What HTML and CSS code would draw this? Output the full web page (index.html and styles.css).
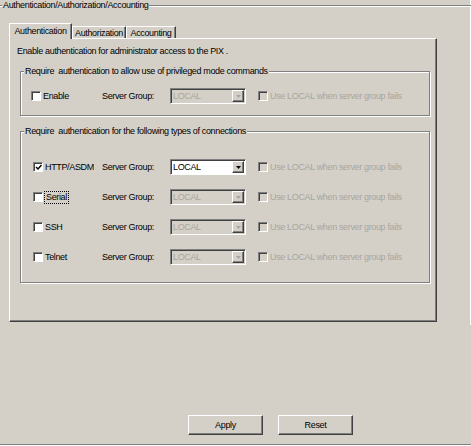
FILE: index.html
```html
<!DOCTYPE html>
<html lang="en">

<head>
    <meta charset="UTF-8" />
    <meta name="viewport" content="width=device-width, initial-scale=1.0" />
    <title>AAA</title>
    <link rel="stylesheet" href="styles.css">
</head>

<body>

    <fieldset class="outer">
        <legend>Authentication/Authorization/Accounting</legend>

        <div class="tabs">
            <div class="tab active">Authentication</div>
            <div class="tab tab-authz">Authorization</div>
            <div class="tab tab-acct">Accounting</div>
        </div>

        <div class="panel">
            <p class="intro">Enable authentication for administrator access to the PIX .</p>

            <fieldset class="group group-priv">
                <legend>Require&nbsp; authentication to allow use of privileged mode commands</legend>
                <div class="row">
                    <label class="check"><span class="box"></span>Enable</label>
                    <span class="sg">Server Group:</span>
                    <div class="combo disabled"><span class="value">LOCAL</span><span class="drop"><svg width="5" height="3" viewBox="0 0 5 3"><polygon points="0,0 5,0 2.5,3" /></svg></span></div>
                    <label class="check fallback disabled"><span class="box"></span>Use LOCAL when server group fails</label>
                </div>
            </fieldset>

            <fieldset class="group group-conn">
                <legend>Require&nbsp; authentication for the following types of connections</legend>
                <div class="row">
                    <label class="check"><span class="box"><svg width="7" height="7" viewBox="0 0 7 7"><path d="M1 3 L3 5 L6.5 1" /></svg></span>HTTP/ASDM</label>
                    <span class="sg">Server Group:</span>
                    <div class="combo"><span class="value">LOCAL</span><span class="drop"><svg width="5" height="3" viewBox="0 0 5 3"><polygon points="0,0 5,0 2.5,3" /></svg></span></div>
                    <label class="check fallback disabled"><span class="box"></span>Use LOCAL when server group fails</label>
                </div>
                <div class="row">
                    <label class="check"><span class="box"></span><span class="focus">Serial</span></label>
                    <span class="sg">Server Group:</span>
                    <div class="combo disabled"><span class="value">LOCAL</span><span class="drop"><svg width="5" height="3" viewBox="0 0 5 3"><polygon points="0,0 5,0 2.5,3" /></svg></span></div>
                    <label class="check fallback disabled"><span class="box"></span>Use LOCAL when server group fails</label>
                </div>
                <div class="row">
                    <label class="check"><span class="box"></span>SSH</label>
                    <span class="sg">Server Group:</span>
                    <div class="combo disabled"><span class="value">LOCAL</span><span class="drop"><svg width="5" height="3" viewBox="0 0 5 3"><polygon points="0,0 5,0 2.5,3" /></svg></span></div>
                    <label class="check fallback disabled"><span class="box"></span>Use LOCAL when server group fails</label>
                </div>
                <div class="row">
                    <label class="check"><span class="box"></span>Telnet</label>
                    <span class="sg">Server Group:</span>
                    <div class="combo disabled"><span class="value">LOCAL</span><span class="drop"><svg width="5" height="3" viewBox="0 0 5 3"><polygon points="0,0 5,0 2.5,3" /></svg></span></div>
                    <label class="check fallback disabled"><span class="box"></span>Use LOCAL when server group fails</label>
                </div>
            </fieldset>
        </div>

        <div class="buttons">
            <button>Apply</button>
            <button>Reset</button>
        </div>
    </fieldset>

</body>

</html>
```

FILE: styles.css
```css
* {
    box-sizing: border-box;
}

body {
    margin: 0;
    height: 446px;
    overflow: hidden;
    font-family: "Liberation Sans", Arial, sans-serif;
    font-size: 9px;
    letter-spacing: -0.35px;
    line-height: 11px;
    color: #000;
    background: linear-gradient(#fff, #fff) no-repeat 470px 0 / 1px 325px, #d4d0c8;
}

fieldset {
    margin: 0;
    padding: 0;
    min-width: 0;
    border: 1px solid #808080;
    box-shadow: inset 1px 1px 0 #fff, 1px 1px 0 #fff;
}

legend {
    padding: 0 1px;
    line-height: 11px;
    background: #d4d0c8;
}

/* outer titled frame */
.outer {
    height: 445px;
    margin: 0 -3px;
}

.outer > legend {
    margin-left: 4px;
}

/* tabs */
.tabs {
    display: flex;
    align-items: flex-end;
    height: 15px;
    margin: 12px 0 0 11px;
}

.tab {
    height: 12px;
    padding-top: 1px;
    border: 1px solid #fff;
    border-bottom: 0;
    border-right-color: #404040;
    box-shadow: inset -1px 0 0 #808080;
    text-align: center;
    white-space: nowrap;
}

.tab.active {
    width: 63px;
    height: 16px;
    padding-top: 2px;
    margin-bottom: -1px;
    position: relative;
    z-index: 1;
    background: #d4d0c8;
}

.tab-authz {
    width: 54px;
}

.tab-acct {
    width: 50px;
}

.panel {
    width: 428px;
    height: 284px;
    margin-left: 11px;
    padding: 7px 0 0 7px;
    border: 1px solid;
    border-color: #fff #404040 #404040 #fff;
    box-shadow: inset -1px -1px 0 #808080;
}

.intro {
    margin: 0;
}

/* group boxes */
.group {
    width: 410px;
    margin: 10px 0 0 3px;
}

.group-priv {
    margin-top: 9px;
    padding: 11px 0;
}

.group > legend {
    margin-left: 3px;
}

.group-conn {
    padding: 22px 0 17px;
}

.row {
    display: grid;
    grid-template-columns: 71px 68px 76px auto;
    align-items: center;
    height: 16px;
    padding-left: 10px;
}

.group-conn .row {
    grid-template-columns: 69px 68px 76px auto;
    padding-left: 12px;
}

.row + .row {
    margin-top: 14px;
}

.check {
    display: flex;
    align-items: center;
    gap: 2px;
    white-space: nowrap;
}

.box {
    display: flex;
    align-items: center;
    justify-content: center;
    width: 10px;
    height: 10px;
    border: 1px solid;
    border-color: #808080 #fff #fff #808080;
    box-shadow: inset 1px 1px 0 #404040;
    background: #fff;
}

.box path {
    fill: none;
    stroke: #000;
    stroke-width: 1.5;
}

.check.disabled {
    color: #a8a69f;
}

.check.disabled .box {
    background: #d4d0c8;
}

.fallback {
    margin-left: 12px;
}

.focus {
    outline: 1px dotted #000;
    padding: 0 1px;
}

/* combo boxes */
.combo {
    display: flex;
    align-items: center;
    width: 76px;
    height: 16px;
    padding: 1px 1px 1px 2px;
    border: 1px solid;
    border-color: #808080 #fff #fff #808080;
    box-shadow: inset 1px 1px 0 #404040;
    background: #fff;
}

.combo .value {
    flex: 1;
}

.drop {
    display: flex;
    align-items: center;
    justify-content: center;
    width: 12px;
    height: 12px;
    border: 1px solid;
    border-color: #fff #404040 #404040 #fff;
    box-shadow: inset -1px -1px 0 #808080;
    background: #d4d0c8;
}

.drop polygon {
    fill: #000;
}

.combo.disabled {
    background: #d4d0c8;
    color: #a8a69f;
}

.combo.disabled .drop polygon {
    fill: #a8a69f;
}

/* bottom buttons */
.buttons {
    display: flex;
    gap: 15px;
    margin-top: 93px;
    padding-left: 190px;
}

.buttons button {
    width: 75px;
    height: 20px;
    padding: 0;
    font: inherit;
    letter-spacing: inherit;
    color: #000;
    background: #d4d0c8;
    border: 1px solid;
    border-color: #fff #404040 #404040 #fff;
    box-shadow: inset -1px -1px 0 #808080;
}
```
